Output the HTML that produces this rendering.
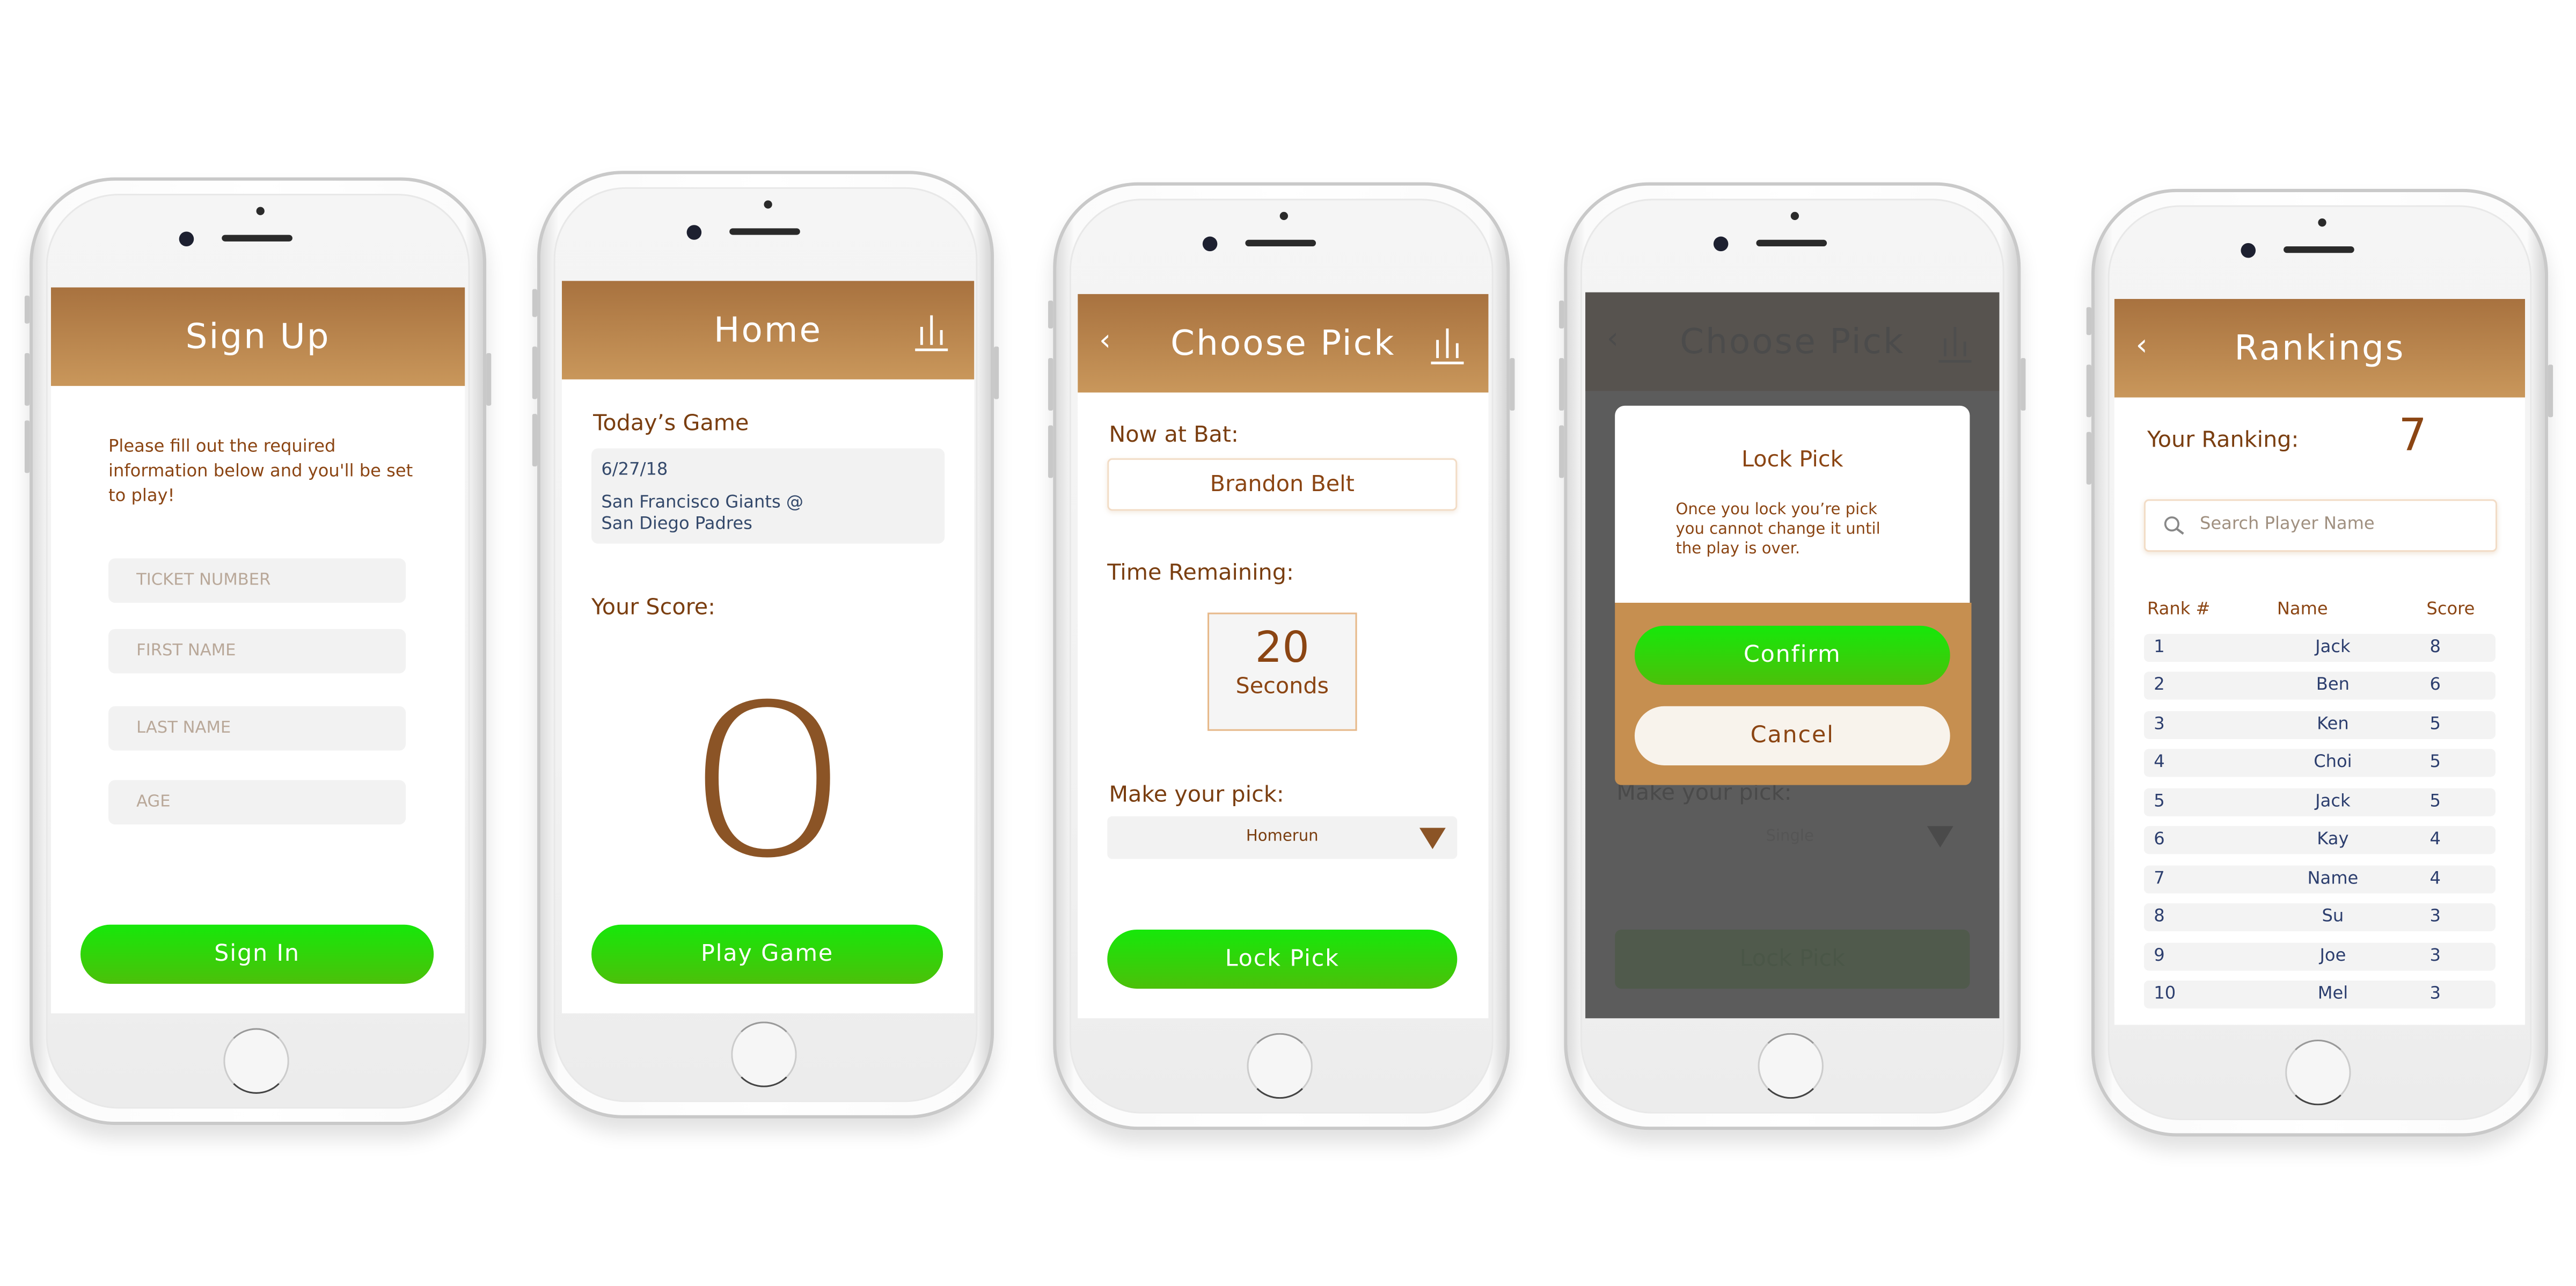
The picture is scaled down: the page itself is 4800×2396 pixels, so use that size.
<!DOCTYPE html>
<html><head><meta charset="utf-8"><style>
html,body{margin:0;padding:0;background:#fff;width:4800px;height:2396px;overflow:hidden}
#s{position:absolute;left:0;top:0;width:1568px;height:783px;transform-origin:0 0;transform:scale(3.06122,3.06);font-family:"DejaVu Sans","Liberation Sans",sans-serif}
.a{position:absolute}
.ph{position:absolute;width:274px;height:573px;border-radius:52px;background:linear-gradient(90deg,#dcdcdc,#fbfbfb 4%,#fff 50%,#fbfbfb 96%,#d6d6d6);border:2px solid #c9c9c9;box-shadow:0 8px 12px rgba(0,0,0,.12)}
.face{position:absolute;left:8px;top:8px;right:8px;bottom:8px;border-radius:44px;background:linear-gradient(#f5f5f5,#f2f2f2 60%,#ececec);border:1px solid #e8e8e8}
.cam{position:absolute;width:9px;height:9px;border-radius:50%;background:#1d2030}
.spk{position:absolute;width:43px;height:4px;border-radius:2px;background:#2a2a2a}
.dot{position:absolute;width:5px;height:5px;border-radius:50%;background:#2a2a2a}
.home{position:absolute;width:38px;height:38px;border-radius:50%;border:1.5px solid #777;border-color:#999 #ccc #444 #ccc;background:#f6f6f6}
.scr{position:absolute;width:252px;height:442px;background:#fff;overflow:hidden}
.hd{position:absolute;left:0;top:0;width:100%;height:60px;background:linear-gradient(#a8723f,#c9975b);color:#fff;font-size:21px;text-align:center;line-height:60px;letter-spacing:1px}
.btn{position:absolute;height:36px;border-radius:18px;background:linear-gradient(#16e80a,#4cc00a);color:#fff;font-size:14px;text-align:center;line-height:36px;letter-spacing:.6px}
.inp{position:absolute;left:35px;width:181px;height:27px;background:#f2f2f2;border-radius:4px;color:#b9a899;font-size:10px;line-height:27px;text-indent:17px}
.br{color:#8b4513}
.lb{position:absolute;font-size:13.5px;color:#7a3e10}
.bars{position:absolute;width:20px;height:24px}
.back{position:absolute;color:#fff;font-size:18px}
.row{position:absolute;left:18px;width:214px;height:17px;background:#f3f3f3;border-radius:3px;font-size:10.5px;color:#2c3e6e;line-height:17px}
.side{position:absolute;width:3px;background:#c8c8c8;border-radius:1px}
</style></head><body><div id="s">

<!-- PHONE 1 -->
<div class="ph" style="left:18px;top:108px"><div class="face"></div>
<div class="dot" style="left:136px;top:16px"></div><div class="cam" style="left:89px;top:31px"></div><div class="spk" style="left:115px;top:33px"></div>
<div class="home" style="left:116px;top:516px"></div></div>
<div class="side" style="left:15px;top:180px;height:17px"></div><div class="side" style="left:15px;top:215px;height:32px"></div><div class="side" style="left:15px;top:256px;height:32px"></div><div class="side" style="left:296px;top:215px;height:32px"></div>
<div class="scr" style="left:31px;top:175px">
<div class="hd">Sign Up</div>
<div class="a br" style="left:35px;top:90px;font-size:10.5px;line-height:15px;width:186px">Please fill out the required information below and you'll be set to play!</div>
<div class="inp" style="top:165px">TICKET NUMBER</div>
<div class="inp" style="top:208px">FIRST NAME</div>
<div class="inp" style="top:255px">LAST NAME</div>
<div class="inp" style="top:300px">AGE</div>
<div class="btn" style="left:18px;top:388px;width:215px">Sign In</div>
</div>

<!-- PHONE 2 -->
<div class="ph" style="left:327px;top:104px"><div class="face"></div>
<div class="dot" style="left:136px;top:16px"></div><div class="cam" style="left:89px;top:31px"></div><div class="spk" style="left:115px;top:33px"></div>
<div class="home" style="left:116px;top:516px"></div></div>
<div class="side" style="left:324px;top:176px;height:17px"></div><div class="side" style="left:324px;top:211px;height:32px"></div><div class="side" style="left:324px;top:252px;height:32px"></div><div class="side" style="left:605px;top:211px;height:32px"></div>
<div class="scr" style="left:342px;top:171px;width:251px;height:446px">
<div class="hd">Home</div>
<svg class="bars" style="left:215px;top:19px" viewBox="0 0 20 24"><g stroke="#fff" stroke-width="1.6" fill="none"><line x1="4" y1="20" x2="4" y2="9"/><line x1="10" y1="20" x2="10" y2="2"/><line x1="16" y1="20" x2="16" y2="11"/><line x1="0" y1="23" x2="20" y2="23"/></g></svg>
<div class="lb" style="left:19px;top:79px">Today’s Game</div>
<div class="a" style="left:18px;top:102px;width:215px;height:58px;background:#f2f2f2;border-radius:4px;color:#34496b;font-size:10.5px;line-height:13px">
<div class="a" style="left:6px;top:7px">6/27/18</div>
<div class="a" style="left:6px;top:27px">San Francisco Giants @<br>San Diego Padres</div></div>
<div class="lb" style="left:18px;top:191px">Your Score:</div>
<div class="a" style="left:0;width:251px;top:231px;text-align:center;font-size:142px;line-height:150px;color:#8b5426;font-weight:200;transform:scale(1.18,0.9)">0</div>
<div class="btn" style="left:18px;top:392px;width:214px">Play Game</div>
</div>

<!-- PHONE 3 -->
<div class="ph" style="left:641px;top:111px"><div class="face"></div>
<div class="dot" style="left:136px;top:16px"></div><div class="cam" style="left:89px;top:31px"></div><div class="spk" style="left:115px;top:33px"></div>
<div class="home" style="left:116px;top:516px"></div></div>
<div class="side" style="left:638px;top:183px;height:17px"></div><div class="side" style="left:638px;top:218px;height:32px"></div><div class="side" style="left:638px;top:259px;height:32px"></div><div class="side" style="left:919px;top:218px;height:32px"></div>
<div class="scr" style="left:656px;top:179px;width:250px;height:441px">
<div class="hd">Choose Pick</div>
<div class="back" style="left:13px;top:18px">‹</div>
<svg class="bars" style="left:215px;top:19px" viewBox="0 0 20 24"><g stroke="#fff" stroke-width="1.6" fill="none"><line x1="4" y1="20" x2="4" y2="9"/><line x1="10" y1="20" x2="10" y2="2"/><line x1="16" y1="20" x2="16" y2="11"/><line x1="0" y1="23" x2="20" y2="23"/></g></svg>
<div class="lb" style="left:19px;top:78px">Now at Bat:</div>
<div class="a br" style="left:18px;top:100px;width:211px;height:30px;border:1px solid #f2dcc6;border-radius:3px;text-align:center;line-height:30px;font-size:13.5px;box-shadow:0 1px 3px rgba(200,150,100,.2)">Brandon Belt</div>
<div class="lb" style="left:18px;top:162px">Time Remaining:</div>
<div class="a br" style="left:79px;top:194px;width:89px;height:70px;background:#f5f5f5;border:1px solid #e7b98a;text-align:center">
<div style="font-size:26px;margin-top:6px;line-height:30px">20</div><div style="font-size:13.5px">Seconds</div></div>
<div class="lb" style="left:19px;top:297px">Make your pick:</div>
<div class="a" style="left:18px;top:318px;width:213px;height:26px;background:#f2f2f2;border-radius:3px;font-size:9.5px;color:#7a3e10;text-align:center;line-height:26px">Homerun</div>
<svg class="a" style="left:208px;top:325px" width="16" height="13"><polygon points="0,0 16,0 8,13" fill="#8b5426"/></svg>
<div class="btn" style="left:18px;top:387px;width:213px">Lock Pick</div>
</div>

<!-- PHONE 4 -->
<div class="ph" style="left:952px;top:111px"><div class="face"></div>
<div class="dot" style="left:136px;top:16px"></div><div class="cam" style="left:89px;top:31px"></div><div class="spk" style="left:115px;top:33px"></div>
<div class="home" style="left:116px;top:516px"></div></div>
<div class="side" style="left:949px;top:183px;height:17px"></div><div class="side" style="left:949px;top:218px;height:32px"></div><div class="side" style="left:949px;top:259px;height:32px"></div><div class="side" style="left:1230px;top:218px;height:32px"></div>
<div class="scr" style="left:965px;top:178px;width:252px;height:442px;background:#5c5c5c">
<div class="hd" style="background:#57534f;color:#4b4b4b">Choose Pick</div>
<div class="back" style="left:13px;top:18px;color:#4b4b4b">‹</div>
<svg class="bars" style="left:215px;top:19px" viewBox="0 0 20 24"><g stroke="#4e4e4e" stroke-width="1.6" fill="none"><line x1="4" y1="20" x2="4" y2="9"/><line x1="10" y1="20" x2="10" y2="2"/><line x1="16" y1="20" x2="16" y2="11"/><line x1="0" y1="23" x2="20" y2="23"/></g></svg>
<div class="lb" style="left:19px;top:297px;color:#4a4a4a">Make your pick:</div>
<div class="a" style="left:18px;top:319px;width:213px;height:26px;font-size:9.5px;color:#555;text-align:center;line-height:26px">Single</div>
<svg class="a" style="left:208px;top:325px" width="16" height="13"><polygon points="0,0 16,0 8,13" fill="#4a4a4a"/></svg>
<div class="a" style="left:18px;top:388px;width:216px;height:36px;background:#505a4c;border-radius:4px;color:#4a5647;font-size:14px;text-align:center;line-height:36px">Lock Pick</div>
<div class="a" style="left:18px;top:69px;width:216px;height:120px;background:#fff;border-radius:6px 6px 0 0"></div>
<div class="a br" style="left:18px;top:94px;width:216px;text-align:center;font-size:13.5px">Lock Pick</div>
<div class="a br" style="left:55px;top:127px;font-size:9.5px;line-height:12px">Once you lock you’re pick<br>you cannot change it until<br>the play is over.</div>
<div class="a" style="left:18px;top:189px;width:217px;height:111px;background:#c68f50;border-radius:0 0 4px 4px"></div>
<div class="btn" style="left:30px;top:203px;width:192px">Confirm</div>
<div class="btn br" style="left:30px;top:252px;width:192px;background:#f8f3ec;color:#8b4513">Cancel</div>
</div>

<!-- PHONE 5 -->
<div class="ph" style="left:1273px;top:115px"><div class="face"></div>
<div class="dot" style="left:136px;top:16px"></div><div class="cam" style="left:89px;top:31px"></div><div class="spk" style="left:115px;top:33px"></div>
<div class="home" style="left:116px;top:516px"></div></div>
<div class="side" style="left:1270px;top:187px;height:17px"></div><div class="side" style="left:1270px;top:222px;height:32px"></div><div class="side" style="left:1270px;top:263px;height:32px"></div><div class="side" style="left:1551px;top:222px;height:32px"></div>
<div class="scr" style="left:1287px;top:182px;width:250px;height:442px">
<div class="hd">Rankings</div>
<div class="back" style="left:13px;top:18px">‹</div>
<div class="lb" style="left:20px;top:78px">Your Ranking:</div>
<div class="a br" style="left:173px;top:68px;font-size:27px">7</div>
<div class="a" style="left:18px;top:122px;width:213px;height:30px;border:1px solid #f2dcc6;border-radius:3px;box-shadow:0 1px 3px rgba(200,150,100,.25)">
<svg class="a" style="left:11px;top:9px" width="13" height="12"><circle cx="5" cy="5" r="4" stroke="#888" stroke-width="1.2" fill="none"/><line x1="8" y1="8" x2="12" y2="11" stroke="#888" stroke-width="1.4"/></svg>
<div class="a" style="left:33px;top:8px;font-size:10.5px;color:#a09080">Search Player Name</div></div>
<div class="a br" style="left:20px;top:183px;font-size:10.5px">Rank #</div>
<div class="a br" style="left:99px;top:183px;font-size:10.5px">Name</div>
<div class="a br" style="left:190px;top:183px;font-size:10.5px">Score</div>
<div class="row" style="top:204px"><span class="a" style="left:6px">1</span><span class="a" style="left:84px;width:62px;text-align:center">Jack</span><span class="a" style="left:174px">8</span></div>
<div class="row" style="top:227px"><span class="a" style="left:6px">2</span><span class="a" style="left:84px;width:62px;text-align:center">Ben</span><span class="a" style="left:174px">6</span></div>
<div class="row" style="top:251px"><span class="a" style="left:6px">3</span><span class="a" style="left:84px;width:62px;text-align:center">Ken</span><span class="a" style="left:174px">5</span></div>
<div class="row" style="top:274px"><span class="a" style="left:6px">4</span><span class="a" style="left:84px;width:62px;text-align:center">Choi</span><span class="a" style="left:174px">5</span></div>
<div class="row" style="top:298px"><span class="a" style="left:6px">5</span><span class="a" style="left:84px;width:62px;text-align:center">Jack</span><span class="a" style="left:174px">5</span></div>
<div class="row" style="top:321px"><span class="a" style="left:6px">6</span><span class="a" style="left:84px;width:62px;text-align:center">Kay</span><span class="a" style="left:174px">4</span></div>
<div class="row" style="top:345px"><span class="a" style="left:6px">7</span><span class="a" style="left:84px;width:62px;text-align:center">Name</span><span class="a" style="left:174px">4</span></div>
<div class="row" style="top:368px"><span class="a" style="left:6px">8</span><span class="a" style="left:84px;width:62px;text-align:center">Su</span><span class="a" style="left:174px">3</span></div>
<div class="row" style="top:392px"><span class="a" style="left:6px">9</span><span class="a" style="left:84px;width:62px;text-align:center">Joe</span><span class="a" style="left:174px">3</span></div>
<div class="row" style="top:415px"><span class="a" style="left:6px">10</span><span class="a" style="left:84px;width:62px;text-align:center">Mel</span><span class="a" style="left:174px">3</span></div>
</div>

</div></body></html>
